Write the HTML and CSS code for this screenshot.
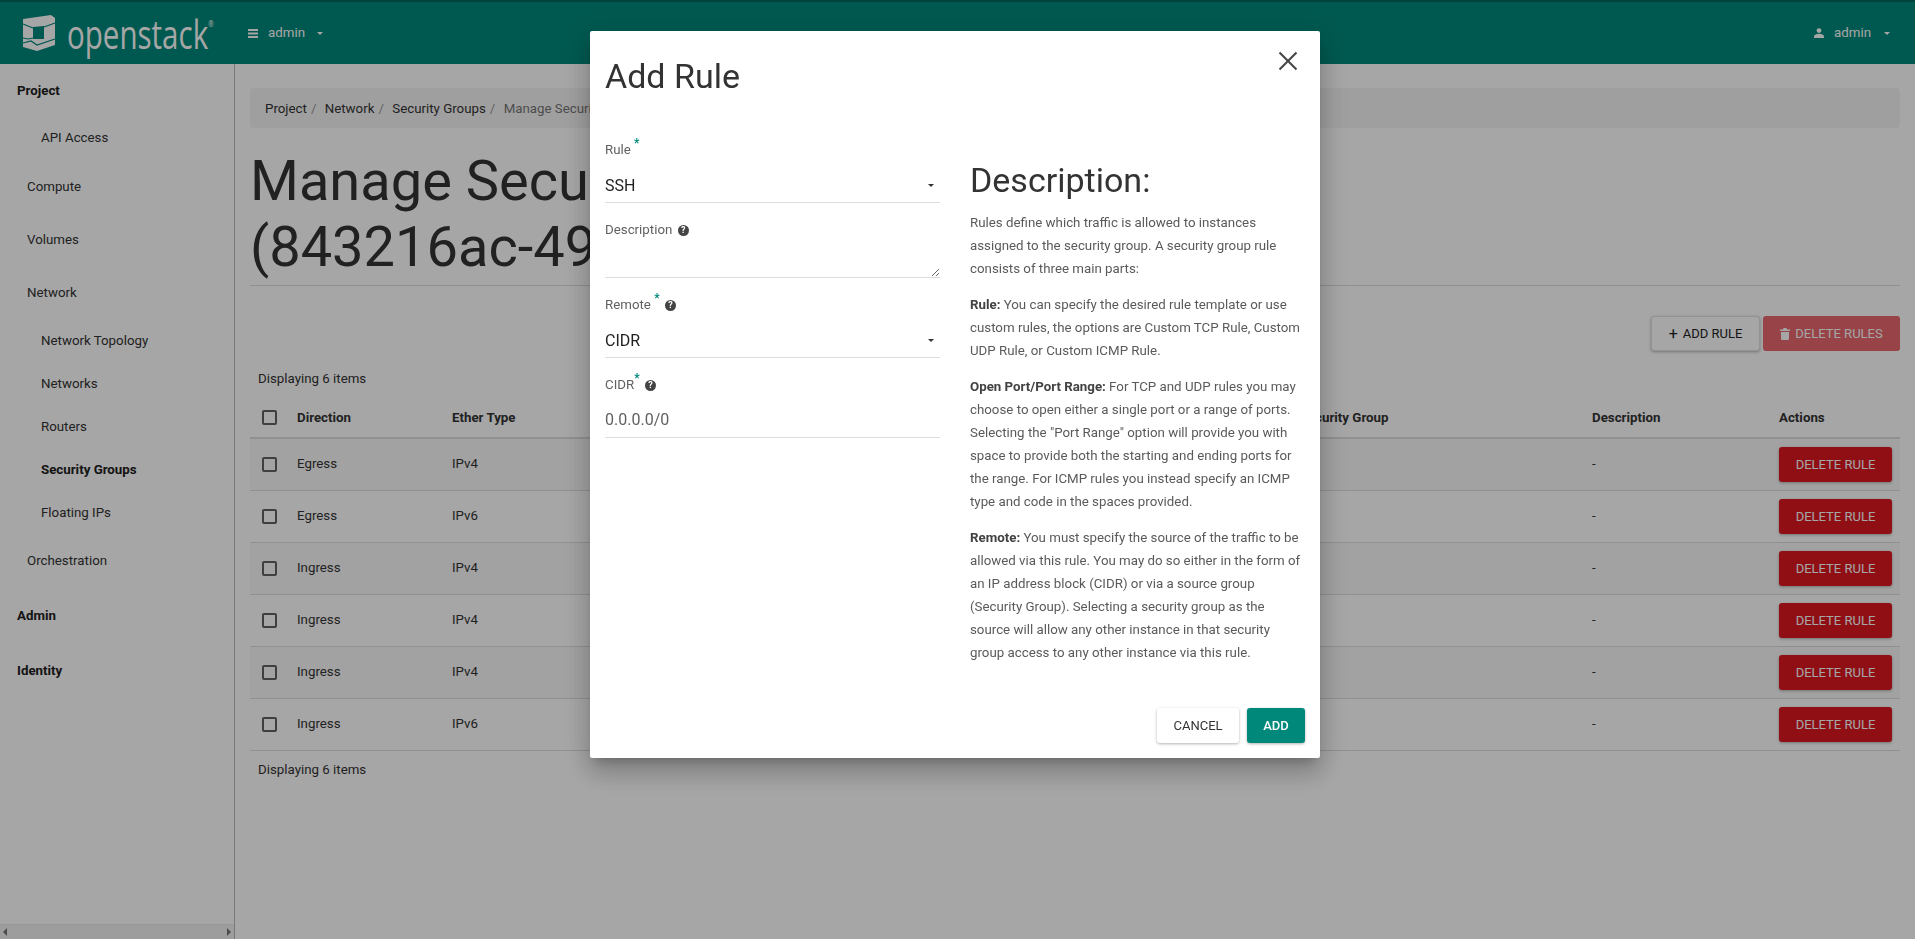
FILE: index.html
```html
<!DOCTYPE html>
<html lang="en">

<head>
    <meta charset="UTF-8" />
    <meta name="viewport" content="width=device-width, initial-scale=1.0" />
    <title>Manage Security Group Rules</title>
    <link rel="stylesheet" href="styles.css">
</head>

<body>
    <header class="top-nav">
        <a class="brand" href="#">
            <svg class="brand-mark" viewBox="0 0 34 38" width="34" height="38">
                <path fill="#fff" fill-rule="evenodd" d="M1 5 L29 1 L33 4 L33 31 L15 37 L1 33 Z M11 13 L11 25 L22 25 L22 12 Z" />
                <path fill="none" stroke="#00897b" stroke-width="1.2" d="M1 10 L11 14 M33 9 L22 13 M1 24 L6 25 L11 24 M1 29 L9 27 L15 31 L33 25" />
            </svg>
            <span class="brand-name">openstack<sup class="brand-reg">®</sup></span>
        </a>
        <div class="nav-project">
            <svg class="nav-icon" viewBox="0 0 10 9" width="10" height="9">
                <path fill="#fff" d="M0 0h10v2H0zM0 3.5h10v2H0zM0 7h10v2H0z" />
            </svg>
            <span>admin</span>
            <span class="caret"></span>
        </div>
        <div class="nav-user">
            <svg class="nav-icon" viewBox="0 0 10 10" width="10" height="10">
                <circle cx="5" cy="2.6" r="2.4" fill="#fff" />
                <path fill="#fff" d="M0 10V8.4C0 6.7 2.5 5.8 5 5.8s5 .9 5 2.6V10z" />
            </svg>
            <span>admin</span>
            <span class="caret caret-user"></span>
        </div>
    </header>

    <div class="page">
        <aside class="sidebar">
            <nav class="side-menu">
                <a class="side-dash" href="#">Project</a>
                <a class="side-panel first" href="#">API Access</a>
                <a class="side-group" href="#">Compute</a>
                <a class="side-group" href="#">Volumes</a>
                <a class="side-group" href="#">Network</a>
                <a class="side-panel" href="#">Network Topology</a>
                <a class="side-panel" href="#">Networks</a>
                <a class="side-panel" href="#">Routers</a>
                <a class="side-panel active" href="#">Security Groups</a>
                <a class="side-panel" href="#">Floating IPs</a>
                <a class="side-group" href="#">Orchestration</a>
                <a class="side-dash gap" href="#">Admin</a>
                <a class="side-dash gap" href="#">Identity</a>
            </nav>
            <div class="side-scroll">
                <span class="arrow-left"></span>
                <span class="arrow-right"></span>
            </div>
        </aside>

        <main class="content">
            <div class="crumbs">
                <a href="#">Project</a><span class="crumb-sep">/</span>
                <a href="#">Network</a><span class="crumb-sep">/</span>
                <a href="#">Security Groups</a><span class="crumb-sep">/</span>
                <span class="crumb-now">Manage Security Group Rules</span>
            </div>

            <h1 class="page-title">Manage Security Group Rules:<br />(843216ac-49</h1>

            <div class="table-actions">
                <button class="btn btn-plain"><span class="btn-plus">+</span> Add Rule</button>
                <button class="btn btn-red btn-off">
                    <svg viewBox="0 0 10 12" width="10" height="12">
                        <path fill="#fff" d="M0 1.5h3L3.5 0h3L7 1.5h3V3H0zM1 4h8v7a1 1 0 0 1-1 1H2a1 1 0 0 1-1-1z" />
                    </svg>
                    Delete Rules
                </button>
            </div>

            <div class="count">Displaying 6 items</div>

            <table class="rules">
                <colgroup>
                    <col class="c-check" />
                    <col class="c-dir" />
                    <col class="c-ether" />
                    <col class="c-proto" />
                    <col class="c-port" />
                    <col class="c-prefix" />
                    <col class="c-group" />
                    <col class="c-desc" />
                    <col class="c-act" />
                </colgroup>
                <thead>
                    <tr>
                        <th><input class="check" type="checkbox" /></th>
                        <th>Direction</th>
                        <th>Ether Type</th>
                        <th>IP Protocol</th>
                        <th>Port Range</th>
                        <th>Remote IP Prefix</th>
                        <th>Remote Security Group</th>
                        <th>Description</th>
                        <th>Actions</th>
                    </tr>
                </thead>
                <tbody>
                    <tr>
                        <td><input class="check" type="checkbox" /></td>
                        <td>Egress</td>
                        <td>IPv4</td>
                        <td>Any</td>
                        <td>Any</td>
                        <td>0.0.0.0/0</td>
                        <td>-</td>
                        <td>-</td>
                        <td><button class="btn btn-red">Delete Rule</button></td>
                    </tr>
                    <tr>
                        <td><input class="check" type="checkbox" /></td>
                        <td>Egress</td>
                        <td>IPv6</td>
                        <td>Any</td>
                        <td>Any</td>
                        <td>::/0</td>
                        <td>-</td>
                        <td>-</td>
                        <td><button class="btn btn-red">Delete Rule</button></td>
                    </tr>
                    <tr>
                        <td><input class="check" type="checkbox" /></td>
                        <td>Ingress</td>
                        <td>IPv4</td>
                        <td>Any</td>
                        <td>Any</td>
                        <td>-</td>
                        <td>-</td>
                        <td>-</td>
                        <td><button class="btn btn-red">Delete Rule</button></td>
                    </tr>
                    <tr>
                        <td><input class="check" type="checkbox" /></td>
                        <td>Ingress</td>
                        <td>IPv4</td>
                        <td>TCP</td>
                        <td>22 (SSH)</td>
                        <td>0.0.0.0/0</td>
                        <td>-</td>
                        <td>-</td>
                        <td><button class="btn btn-red">Delete Rule</button></td>
                    </tr>
                    <tr>
                        <td><input class="check" type="checkbox" /></td>
                        <td>Ingress</td>
                        <td>IPv4</td>
                        <td>ICMP</td>
                        <td>Any</td>
                        <td>0.0.0.0/0</td>
                        <td>-</td>
                        <td>-</td>
                        <td><button class="btn btn-red">Delete Rule</button></td>
                    </tr>
                    <tr>
                        <td><input class="check" type="checkbox" /></td>
                        <td>Ingress</td>
                        <td>IPv6</td>
                        <td>Any</td>
                        <td>Any</td>
                        <td>-</td>
                        <td>-</td>
                        <td>-</td>
                        <td><button class="btn btn-red">Delete Rule</button></td>
                    </tr>
                </tbody>
            </table>

            <div class="count count-foot">Displaying 6 items</div>
        </main>
    </div>

    <div class="backdrop"></div>

    <div class="modal">
        <div class="modal-head">
            <h3 class="modal-title">Add Rule</h3>
            <svg class="modal-close" viewBox="0 0 20 20" width="20" height="20">
                <path fill="none" stroke="#444" stroke-width="2" d="M1.5 1.5 L18.5 18.5 M18.5 1.5 L1.5 18.5" />
            </svg>
        </div>

        <div class="modal-body">
            <div class="form-col">
                <div class="field">
                    <label class="field-label">Rule <sup class="req">*</sup></label>
                    <div class="select-wrap">
                        <select class="field-input">
                            <option>SSH</option>
                        </select>
                        <span class="caret caret-dark"></span>
                    </div>
                </div>
                <div class="field">
                    <label class="field-label">Description <span class="help">?</span></label>
                    <textarea class="field-area"></textarea>
                </div>
                <div class="field">
                    <label class="field-label">Remote <sup class="req">*</sup> <span class="help">?</span></label>
                    <div class="select-wrap">
                        <select class="field-input">
                            <option>CIDR</option>
                        </select>
                        <span class="caret caret-dark"></span>
                    </div>
                </div>
                <div class="field">
                    <label class="field-label">CIDR<sup class="req">*</sup> <span class="help">?</span></label>
                    <input class="field-input field-text" type="text" value="0.0.0.0/0" />
                </div>
            </div>

            <div class="desc-col">
                <h3 class="desc-title">Description:</h3>
                <p>Rules define which traffic is allowed to instances assigned to the security group. A security group rule consists of three main parts:</p>
                <p><strong>Rule:</strong> You can specify the desired rule template or use custom rules, the options are Custom TCP Rule, Custom UDP Rule, or Custom ICMP Rule.</p>
                <p><strong>Open Port/Port Range:</strong> For TCP and UDP rules you may choose to open either a single port or a range of ports. Selecting the "Port Range" option will provide you with space to provide both the starting and ending ports for the range. For ICMP rules you instead specify an ICMP type and code in the spaces provided.</p>
                <p><strong>Remote:</strong> You must specify the source of the traffic to be allowed via this rule. You may do so either in the form of an IP address block (CIDR) or via a source group (Security Group). Selecting a security group as the source will allow any other instance in that security group access to any other instance via this rule.</p>
            </div>
        </div>

        <div class="modal-foot">
            <button class="btn btn-cancel">Cancel</button>
            <button class="btn btn-teal">Add</button>
        </div>
    </div>
</body>

</html>
```

FILE: styles.css
```css
* {
    margin: 0;
    padding: 0;
    box-sizing: border-box;
}

html,
body {
    height: 100%;
    overflow: hidden;
}

body {
    display: flex;
    flex-direction: column;
    background-color: #fff;
    color: #333;
    font-family: Roboto, "Liberation Sans", sans-serif;
    font-size: 13.3px;
    line-height: 20px;
}

a {
    color: inherit;
    text-decoration: none;
}

/* top bar */
.top-nav {
    display: flex;
    align-items: center;
    flex: none;
    height: 64px;
    background-color: #00897b;
    border-top: 2px solid #00695c;
    color: #fff;
}

.brand {
    display: flex;
    align-items: center;
    flex: none;
    width: 248px;
    padding-left: 22px;
}

.brand-mark {
    flex: none;
}

.brand-name {
    display: inline-block;
    flex: none;
    margin: 0 -60px 0 11px;
    font-family: "Open Sans", sans-serif;
    font-size: 41px;
    font-weight: 400;
    line-height: 46px;
    color: #fff;
    transform: scaleX(0.72);
    transform-origin: left center;
}

.brand-reg {
    font-size: 9px;
    line-height: 0;
    vertical-align: 22px;
}

.nav-project,
.nav-user {
    display: flex;
    align-items: center;
}

.nav-project .nav-icon {
    margin-right: 10px;
}

.nav-user {
    margin-left: auto;
    padding-right: 25px;
}

.nav-user .nav-icon {
    margin-right: 10px;
}

.caret {
    display: inline-block;
    width: 0;
    height: 0;
    margin-left: 12px;
    border-top: 3px solid #fff;
    border-left: 3px solid transparent;
    border-right: 3px solid transparent;
}

.caret-user {
    margin-left: 13px;
}

/* page frame */
.page {
    display: flex;
    flex: 1;
    min-height: 0;
}

.sidebar {
    display: flex;
    flex-direction: column;
    flex: none;
    width: 235px;
    border-right: 1px solid #bbb;
}

.side-menu {
    flex: 1;
    display: flex;
    flex-direction: column;
    padding-top: 17px;
}

.side-menu a {
    display: block;
    height: 20px;
    margin-bottom: 23px;
}

.side-dash {
    padding-left: 17px;
    font-weight: 700;
    color: #212121;
}

.side-menu .side-dash.gap {
    margin-top: 2px;
    margin-bottom: 33px;
}

.side-panel {
    padding-left: 41px;
}

.side-menu .side-panel.first {
    margin-top: 4px;
    margin-bottom: 29px;
}

.side-panel.active {
    font-weight: 700;
    color: #212121;
}

.side-group {
    padding-left: 27px;
}

.side-menu .side-group {
    margin-bottom: 33px;
}

.side-menu .side-group:nth-child(5) {
    margin-bottom: 28px;
}

.side-menu .side-panel:nth-child(10) {
    margin-bottom: 28px;
}

.side-scroll {
    display: flex;
    align-items: center;
    justify-content: space-between;
    flex: none;
    height: 15px;
    padding: 0 3px;
    background-color: #f1f1f1;
    border-top: 1px solid #e8e8e8;
}

.arrow-left {
    border-top: 4px solid transparent;
    border-bottom: 4px solid transparent;
    border-right: 4px solid #757575;
}

.arrow-right {
    border-top: 4px solid transparent;
    border-bottom: 4px solid transparent;
    border-left: 4px solid #757575;
}

.content {
    flex: 1;
    min-width: 0;
    padding: 24px 15px 0;
}

.crumbs {
    height: 40px;
    padding: 11px 15px 9px;
    background-color: #f5f5f5;
    border-radius: 4px;
    white-space: nowrap;
}

.crumb-sep {
    padding: 0 5px 0 4px;
    color: #999;
}

.crumb-now {
    color: #777;
}

.page-title {
    margin-top: 20px;
    padding-bottom: 5px;
    border-bottom: 1px solid #ddd;
    font-size: 56px;
    font-weight: 400;
    line-height: 66px;
    color: #333;
}

.table-actions {
    display: flex;
    justify-content: flex-end;
    gap: 3px;
    margin-top: 30px;
}

/* buttons */
.btn {
    display: inline-flex;
    align-items: center;
    justify-content: center;
    gap: 5px;
    height: 35px;
    padding: 0 16px;
    border: 1px solid transparent;
    border-radius: 3px;
    font-family: inherit;
    font-size: 13px;
    text-transform: uppercase;
    box-shadow: 0 1px 3px rgba(0, 0, 0, 0.3);
    cursor: pointer;
}

.btn-plain {
    width: 109px;
    background-color: #fff;
    border-color: #e0e0e0;
    color: #212121;
}

.btn-plus {
    font-size: 16px;
}

.btn-red {
    width: 113px;
    padding: 0;
    background-color: #dc1820;
    color: #fff;
}

.btn-off {
    width: 137px;
    opacity: 0.65;
    box-shadow: none;
}

.btn-cancel {
    width: 82px;
    padding: 0;
    background-color: #fff;
    color: #333;
}

.btn-teal {
    width: 58px;
    padding: 0;
    background-color: #00897b;
    color: #fff;
    font-weight: 500;
}

/* table */
.count {
    margin-top: 18px;
    padding-left: 8px;
}

.count-foot {
    margin-top: 9px;
}

.rules {
    width: 1650px;
    margin-top: 6px;
    table-layout: fixed;
    border-collapse: collapse;
}

.c-check {
    width: 35px;
}

.c-dir {
    width: 155px;
}

.c-ether {
    width: 200px;
}

.c-proto,
.c-port {
    width: 180px;
}

.c-prefix {
    width: 238px;
}

.c-group {
    width: 342px;
}

.c-desc {
    width: 187px;
}

.c-act {
    width: 133px;
}

.rules th {
    height: 43px;
    padding: 3px 12px 0;
    border-bottom: 2px solid #ddd;
    text-align: left;
    font-weight: 700;
    white-space: nowrap;
}

.rules td {
    height: 52px;
    padding: 0 12px;
    border-bottom: 1px solid #ddd;
    white-space: nowrap;
}

.rules tbody tr:nth-child(odd) {
    background-color: #f9f9f9;
}

.rules th:first-child,
.rules td:first-child {
    padding-right: 0;
}

.check {
    display: block;
    appearance: none;
    width: 15px;
    height: 15px;
    background-color: transparent;
    border: 2px solid #616161;
    border-radius: 2px;
}

/* modal */
.backdrop {
    position: fixed;
    top: 0;
    left: 0;
    right: 0;
    bottom: 0;
    background-color: rgba(0, 0, 0, 0.35);
}

.modal {
    position: fixed;
    top: 31px;
    left: 590px;
    display: flex;
    flex-direction: column;
    width: 730px;
    height: 727px;
    padding: 0 15px 15px;
    background-color: #fff;
    border-radius: 2px;
    box-shadow: 0 16px 24px 2px rgba(0, 0, 0, 0.14), 0 6px 30px 5px rgba(0, 0, 0, 0.12), 0 8px 10px -5px rgba(0, 0, 0, 0.2);
}

.modal-head {
    display: flex;
    justify-content: space-between;
    align-items: flex-start;
    padding-top: 27px;
}

.modal-title,
.desc-title {
    font-size: 34px;
    font-weight: 400;
    line-height: 36px;
    color: #333;
}

.modal-close {
    flex: none;
    margin: -7px 7px 0 0;
}

.modal-body {
    display: flex;
    gap: 30px;
    margin-top: 46px;
}

.form-col {
    flex: none;
    width: 335px;
}

.field {
    margin-bottom: 17px;
}

.field-label {
    display: block;
    height: 20px;
    color: #616161;
}

.req {
    color: #00897b;
    font-weight: 700;
    font-size: 12px;
    line-height: 0;
    vertical-align: 7px;
}

.help {
    display: inline-flex;
    align-items: center;
    justify-content: center;
    width: 11px;
    height: 11px;
    margin-left: 2px;
    background-color: #444;
    border-radius: 50%;
    color: #fff;
    font-size: 9px;
    font-weight: 700;
    line-height: 11px;
    vertical-align: 1px;
}

.select-wrap {
    position: relative;
}

.field-input {
    display: block;
    appearance: none;
    width: 100%;
    height: 43px;
    padding-top: 9px;
    background-color: transparent;
    border: none;
    border-bottom: 1px solid #ddd;
    border-radius: 0;
    font-family: inherit;
    font-size: 16px;
    color: #212121;
}

.field-text {
    padding-top: 7px;
    color: #616161;
}

.select-wrap .caret-dark {
    position: absolute;
    top: 24px;
    right: 6px;
    border-top-color: #333;
}

.field-area {
    display: block;
    width: 100%;
    height: 38px;
    background-color: transparent;
    border: none;
    border-bottom: 1px solid #ddd;
    font-family: inherit;
    outline: none;
}

.desc-col {
    flex: none;
    width: 335px;
    padding-top: 22px;
    color: #5a5a5a;
    line-height: 23px;
}

.desc-title {
    margin-bottom: 13px;
}

.desc-col p {
    margin-bottom: 13px;
}

.desc-col strong {
    color: #424242;
}

.modal-foot {
    display: flex;
    justify-content: flex-end;
    gap: 8px;
    margin-top: auto;
}
```
